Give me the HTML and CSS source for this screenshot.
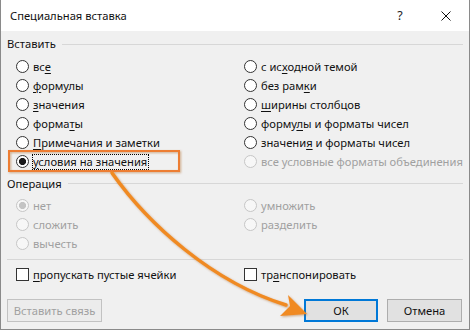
FILE: index.html
```html
<!DOCTYPE html>
<html lang="ru">
<head>
<meta charset="utf-8">
<title>Специальная вставка</title>
<link rel="stylesheet" href="styles.css">
</head>
<body>
<div class="window">
  <div class="titlebar">
    <span class="title">Специальная вставка</span>
    <div class="tb-buttons">
      <span class="tb-btn help">?</span>
      <span class="tb-btn"><svg width="10" height="10" viewBox="0 0 10 10"><path d="M0.5 0.5 L9.5 9.5 M9.5 0.5 L0.5 9.5" stroke="#111" stroke-width="1" fill="none"/></svg></span>
    </div>
  </div>
  <div class="content">
    <div class="group-header"><span>Вставить</span></div>
    <div class="options">
      <div class="opt"><span class="radio"></span><span>вс<u>е</u></span></div>
      <div class="opt"><span class="radio"></span><span>с ис<u>х</u>одной темой</span></div>
      <div class="opt"><span class="radio"></span><span><u>ф</u>ормулы</span></div>
      <div class="opt"><span class="radio"></span><span>без рам<u>к</u>и</span></div>
      <div class="opt"><span class="radio"></span><span><u>з</u>начения</span></div>
      <div class="opt"><span class="radio"></span><span><u>ш</u>ирины столбцов</span></div>
      <div class="opt"><span class="radio"></span><span>форма<u>т</u>ы</span></div>
      <div class="opt"><span class="radio"></span><span>форму<u>л</u>ы и форматы чисел</span></div>
      <div class="opt"><span class="radio"></span><span><u>П</u>римечания и заметки</span></div>
      <div class="opt"><span class="radio"></span><span>значени<u>я</u> и форматы чисел</span></div>
      <div class="opt"><span class="radio checked"></span><span class="focus"><u>у</u>словия на значения</span></div>
      <div class="opt disabled"><span class="radio"></span><span>все условные форматы объединения</span></div>
    </div>
    <div class="group-header op"><span>Операция</span></div>
    <div class="options">
      <div class="opt disabled"><span class="radio checked"></span><span>нет</span></div>
      <div class="opt disabled"><span class="radio"></span><span>умножить</span></div>
      <div class="opt disabled"><span class="radio"></span><span>сложить</span></div>
      <div class="opt disabled"><span class="radio"></span><span>разделить</span></div>
      <div class="opt disabled"><span class="radio"></span><span>вычесть</span></div>
    </div>
    <div class="sep"></div>
    <div class="options">
      <div class="opt"><span class="check"></span><span><u>п</u>ропускать пустые ячейки</span></div>
      <div class="opt"><span class="check"></span><span>тр<u>а</u>нспонировать</span></div>
    </div>
    <div class="buttons">
      <span class="btn disabled wide">Вставить связь</span>
      <div class="btn-group">
        <span class="btn default">ОК</span>
        <span class="btn">Отмена</span>
      </div>
    </div>
  </div>
  <svg class="overlay" width="470" height="330" viewBox="0 0 470 330">
    <defs>
      <filter id="glow" x="-20%" y="-20%" width="140%" height="140%">
        <feDropShadow dx="1" dy="1" stdDeviation="1.2" flood-color="#a0500f" flood-opacity="0.45"/>
      </filter>
    </defs>
    <rect x="9" y="151" width="170" height="20" fill="none" stroke="#ed7d31" stroke-width="2" filter="url(#glow)"/>
    <g filter="url(#glow)">
      <path d="M112 173 C148 224 212 282 286 305" fill="none" stroke="#f08a24" stroke-width="3.5" stroke-linecap="round"/>
      <polygon points="307,314 288,295 290,306 280,316" fill="#f08a24"/>
    </g>
  </svg>
</div>
</body>
</html>
```
FILE: styles.css
```css
* { box-sizing: border-box; margin: 0; padding: 0; }
html, body { width: 470px; height: 330px; overflow: hidden; background: #fff; }
body {
  font-family: "Noto Sans", "Open Sans", sans-serif;
  font-size: 11.2px;
  color: #111;
}
.window {
  position: relative;
  width: 470px;
  height: 330px;
  background: #f0f0f0;
  border: 1px solid #8a8a8a;
  border-top: none;
  display: flex;
  flex-direction: column;
}
.titlebar {
  height: 31px;
  flex: none;
  background: #fff;
  display: flex;
  align-items: center;
  justify-content: space-between;
  padding-left: 9px;
}
.title { line-height: 16px; color: #111; }
.tb-buttons { display: flex; height: 100%; }
.tb-btn {
  width: 46px;
  display: flex;
  align-items: center;
  justify-content: center;
}
.tb-btn.help { font-size: 12.5px; color: #222; }
.content { padding: 0 6px; flex: 1; display: flex; flex-direction: column; }
.group-header {
  height: 26px;
  display: flex;
  align-items: center;
  gap: 6px;
  line-height: 16px;
}
.group-header::after {
  content: "";
  flex: 1;
  height: 1px;
  background: #d7d7d7;
}
.group-header.op { height: 25px; }
.options {
  display: grid;
  grid-template-columns: 228px 1fr;
  grid-auto-rows: 19px;
  padding-left: 9px;
}
.opt {
  display: flex;
  align-items: center;
  gap: 4px;
  white-space: nowrap;
  line-height: 16px;
}
.opt u { text-underline-offset: 2px; }
.radio {
  width: 13px;
  height: 13px;
  flex: none;
  border-radius: 50%;
  border: 1px solid #333;
  background: #fff;
}
.radio.checked {
  background: radial-gradient(circle, #1a1a1a 0, #1a1a1a 3.2px, #fff 3.9px);
}
.disabled { color: #a0a0a0; }
.disabled .radio { border-color: #c6c6c6; background: #f7f7f7; }
.disabled .radio.checked {
  background: radial-gradient(circle, #c4c4c4 0, #c4c4c4 3.2px, #f7f7f7 3.9px);
}
.focus {
  border: 1px dotted #000;
  margin-left: -1px;
  line-height: 14px;
  padding-right: 1px;
}
.check {
  width: 13px;
  height: 13px;
  flex: none;
  border: 1px solid #333;
  background: #fff;
}
.sep {
  height: 1px;
  background: #d7d7d7;
  margin: 6px 0 5px;
}
.buttons {
  display: flex;
  justify-content: space-between;
  margin-top: 15px;
  padding-right: 1px;
}
.btn-group { display: flex; gap: 9px; }
.btn {
  height: 23px;
  width: 75px;
  display: flex;
  align-items: center;
  justify-content: center;
  background: #e1e1e1;
  border: 1px solid #adadad;
  color: #111;
}
.btn.wide { width: 95px; }
.btn.default { border: 2px solid #0078d7; width: 74px; }
.btn.disabled {
  background: #ececec;
  border-color: #c2c2c2;
  color: #a0a0a0;
}
.overlay {
  position: absolute;
  left: -1px;
  top: 0;
  pointer-events: none;
}
```
